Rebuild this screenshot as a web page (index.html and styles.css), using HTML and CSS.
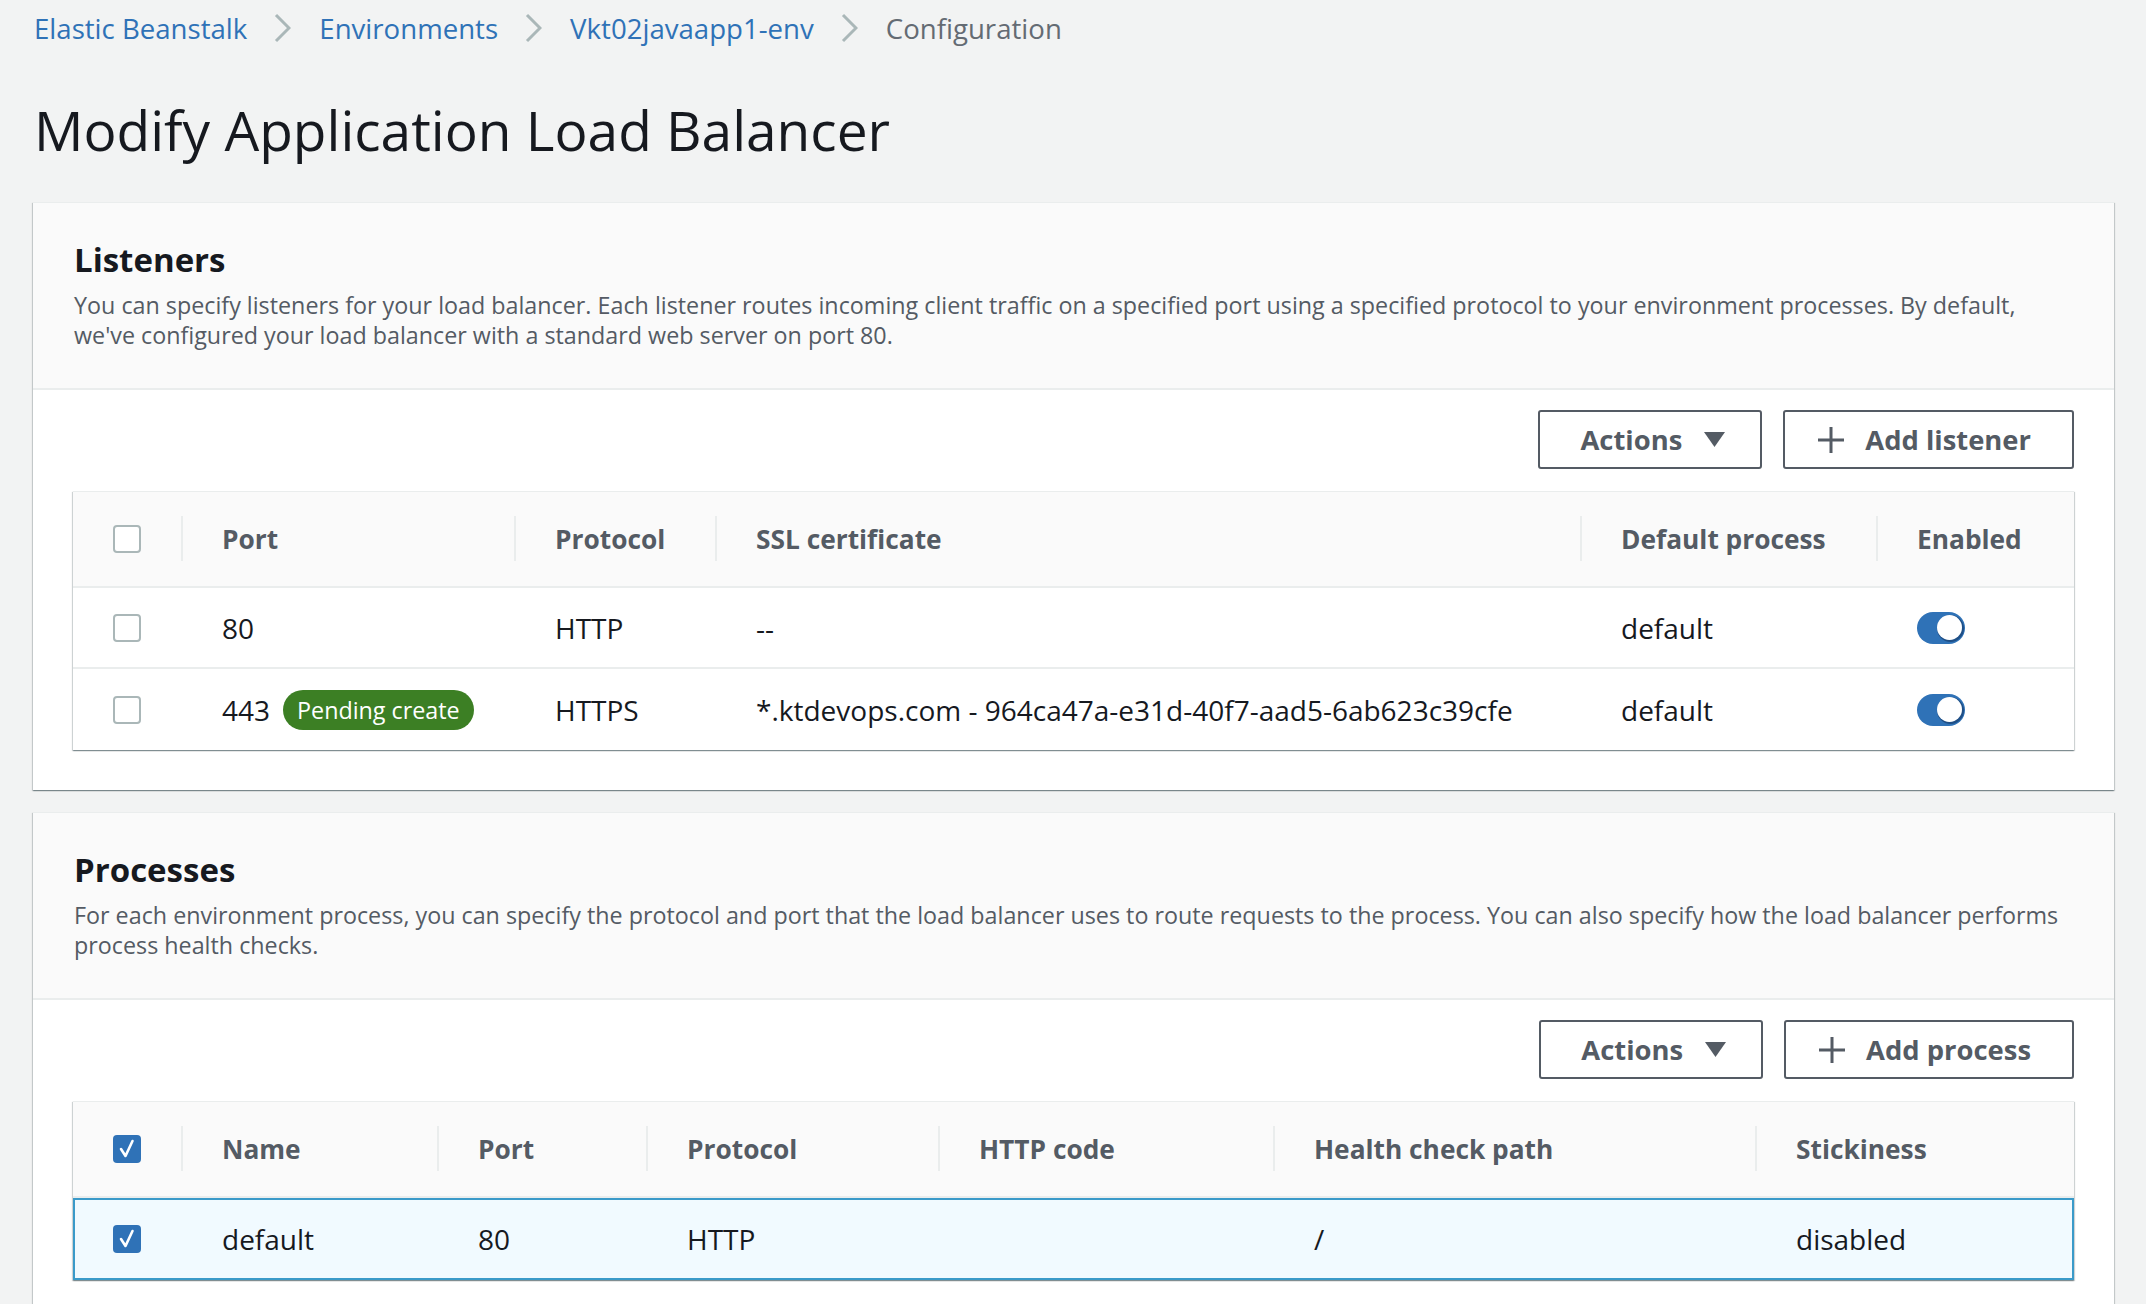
FILE: index.html
```html
<!DOCTYPE html>
<html lang="en">
<head>
<meta charset="utf-8">
<title>Modify Application Load Balancer</title>
<link rel="stylesheet" href="styles.css">
</head>
<body>
<div class="page">
  <nav class="crumbs">
    <a class="crumb-link" href="#">Elastic Beanstalk</a>
    <svg class="chev" viewBox="0 0 17 30" width="17" height="30"><path d="M2 2 L15 15 L2 28" /></svg>
    <a class="crumb-link" href="#">Environments</a>
    <svg class="chev" viewBox="0 0 17 30" width="17" height="30"><path d="M2 2 L15 15 L2 28" /></svg>
    <a class="crumb-link" href="#">Vkt02javaapp1-env</a>
    <svg class="chev" viewBox="0 0 17 30" width="17" height="30"><path d="M2 2 L15 15 L2 28" /></svg>
    <span class="crumb-current">Configuration</span>
  </nav>

  <h1 class="title">Modify Application Load Balancer</h1>

  <section class="panel">
    <header class="panel-head">
      <h2 class="panel-title">Listeners</h2>
      <p class="panel-desc"><span class="line">You can specify listeners for your load balancer. Each listener routes incoming client traffic on a specified port using a specified protocol to your environment processes. By default,</span> <span class="line">we've configured your load balancer with a standard web server on port 80.</span></p>
    </header>
    <div class="panel-body">
      <div class="toolbar">
        <button class="btn btn-actions">Actions <svg class="caret" viewBox="0 0 21 15" width="21" height="15"><polygon points="0,0 21,0 10.5,15" /></svg></button>
        <button class="btn btn-add"><svg class="plus" viewBox="0 0 28 28" width="28" height="28"><path d="M14 1 V27 M1 14 H27" /></svg> Add listener</button>
      </div>
      <div class="table">
        <div class="row head cols-listeners">
          <div class="cell cb"><span class="checkbox"></span></div>
          <div class="cell sep">Port</div>
          <div class="cell sep">Protocol</div>
          <div class="cell sep">SSL certificate</div>
          <div class="cell sep">Default process</div>
          <div class="cell sep">Enabled</div>
        </div>
        <div class="row cols-listeners">
          <div class="cell cb"><span class="checkbox"></span></div>
          <div class="cell">80</div>
          <div class="cell">HTTP</div>
          <div class="cell">--</div>
          <div class="cell">default</div>
          <div class="cell"><span class="toggle"><span class="knob"></span></span></div>
        </div>
        <div class="row last cols-listeners">
          <div class="cell cb"><span class="checkbox"></span></div>
          <div class="cell port-cell">443 <span class="badge">Pending create</span></div>
          <div class="cell">HTTPS</div>
          <div class="cell">*.ktdevops.com - 964ca47a-e31d-40f7-aad5-6ab623c39cfe</div>
          <div class="cell">default</div>
          <div class="cell"><span class="toggle"><span class="knob"></span></span></div>
        </div>
      </div>
    </div>
  </section>

  <section class="panel panel-second">
    <header class="panel-head">
      <h2 class="panel-title">Processes</h2>
      <p class="panel-desc"><span class="line">For each environment process, you can specify the protocol and port that the load balancer uses to route requests to the process. You can also specify how the load balancer performs</span> <span class="line">process health checks.</span></p>
    </header>
    <div class="panel-body">
      <div class="toolbar">
        <button class="btn btn-actions">Actions <svg class="caret" viewBox="0 0 21 15" width="21" height="15"><polygon points="0,0 21,0 10.5,15" /></svg></button>
        <button class="btn btn-add"><svg class="plus" viewBox="0 0 28 28" width="28" height="28"><path d="M14 1 V27 M1 14 H27" /></svg> Add process</button>
      </div>
      <div class="table">
        <div class="row head cols-processes">
          <div class="cell cb"><span class="checkbox checked"><svg viewBox="0 0 28 28" width="28" height="28"><path d="M8 14 L12.5 21 L19.5 6" /></svg></span></div>
          <div class="cell sep">Name</div>
          <div class="cell sep">Port</div>
          <div class="cell sep">Protocol</div>
          <div class="cell sep">HTTP code</div>
          <div class="cell sep">Health check path</div>
          <div class="cell sep">Stickiness</div>
        </div>
        <div class="row selected cols-processes">
          <div class="cell cb"><span class="checkbox checked"><svg viewBox="0 0 28 28" width="28" height="28"><path d="M8 14 L12.5 21 L19.5 6" /></svg></span></div>
          <div class="cell">default</div>
          <div class="cell">80</div>
          <div class="cell">HTTP</div>
          <div class="cell"></div>
          <div class="cell">/</div>
          <div class="cell">disabled</div>
        </div>
      </div>
    </div>
  </section>
</div>
</body>
</html>
```

FILE: styles.css
```css
* { box-sizing: border-box; }

html, body {
  margin: 0;
  padding: 0;
  background: #f2f3f3;
}

body {
  font-family: "Open Sans", "Noto Sans", sans-serif;
  color: #16191f;
}

.page {
  padding: 8px 32px 0 33px;
}

/* Breadcrumbs */
.crumbs {
  display: flex;
  align-items: center;
  height: 40px;
  font-size: 27.6px;
  line-height: 40px;
  padding-left: 1px;
}

.crumb-link {
  color: #2f72b7;
  text-decoration: none;
}

.crumb-current {
  color: #646b73;
}

.chev {
  margin: 0 28px 0 27px;
  fill: none;
  stroke: #aab7b8;
  stroke-width: 3;
}

/* Title */
.title {
  margin: 48px 0 38px;
  font-size: 55px;
  line-height: 68px;
  font-weight: 400;
  color: #16191f;
  padding-left: 1px;
}

/* Panels */
.panel {
  background: #ffffff;
  border-top: 1px solid #eaeded;
  box-shadow: 0 1px 1px 0 rgba(0, 28, 36, 0.3), 1px 1px 1px 0 rgba(0, 28, 36, 0.15), -1px 1px 1px 0 rgba(0, 28, 36, 0.15);
}

.panel-second {
  margin-top: 22px;
}

.panel-head {
  background: #fafafa;
  padding: 35px 40px 38px 41px;
  border-bottom: 2px solid #eaeded;
}

.panel-title {
  margin: 0;
  font-size: 33px;
  line-height: 44px;
  font-weight: 700;
  color: #16191f;
}

.panel-desc {
  margin: 8px 0 0;
  font-size: 23.3px;
  line-height: 30px;
  color: #545b64;
}

.panel-desc .line {
  white-space: nowrap;
}

.panel-body {
  padding: 20px 40px 40px;
}

/* Toolbar & buttons */
.toolbar {
  display: flex;
  justify-content: flex-end;
  gap: 21px;
  margin-bottom: 22px;
}

.btn {
  display: inline-flex;
  align-items: center;
  height: 59px;
  border: 2px solid #545b64;
  border-radius: 3px;
  background: #ffffff;
  color: #545b64;
  font-family: inherit;
  font-size: 27.4px;
  font-weight: 700;
}

.btn-actions {
  gap: 22px;
  padding: 0 35px 0 40px;
}

.btn-add {
  gap: 20px;
  padding: 0 41px 0 32px;
}

.caret {
  fill: #545b64;
}

.plus {
  fill: none;
  stroke: #545b64;
  stroke-width: 3;
}

/* Tables */
.table {
  background: #ffffff;
  border-top: 1px solid #eaeded;
  box-shadow: 0 1px 1px 0 rgba(0, 28, 36, 0.3), 1px 1px 1px 0 rgba(0, 28, 36, 0.15), -1px 1px 1px 0 rgba(0, 28, 36, 0.15);
}

.row {
  display: grid;
  align-items: center;
  height: 81px;
  border-bottom: 2px solid #eaeded;
  font-size: 28px;
  color: #16191f;
}

.row.last {
  border-bottom: none;
  height: 81px;
}

.row.head {
  height: 96px;
  background: #fafafa;
  color: #545b64;
  font-size: 26.3px;
  font-weight: 700;
}

.cols-listeners {
  grid-template-columns: 108px 333px 201px 865px 296px 1fr;
}

.cols-processes {
  grid-template-columns: 108px 256px 209px 292px 335px 482px 1fr;
}

.cell {
  position: relative;
  display: flex;
  align-items: center;
  height: 100%;
  padding-left: 41px;
  white-space: nowrap;
}

.cell.cb {
  padding-left: 40px;
}

.head .cell.sep::before {
  content: "";
  position: absolute;
  left: 0;
  top: 24px;
  bottom: 25px;
  width: 2px;
  background: #eaeded;
}

.row.selected {
  height: 82px;
  background: #f1faff;
  border: 2px solid #3a9ac9;
}

.row.selected .cell.cb {
  padding-left: 38px;
}

.row.selected .cell {
  padding-left: 39px;
}

.checkbox {
  display: inline-block;
  width: 28px;
  height: 28px;
  border: 2px solid #aab7b8;
  border-radius: 4px;
  background: #ffffff;
}

.checkbox.checked {
  border: none;
  background: #2f72b7;
}

.checkbox svg {
  display: block;
  fill: none;
  stroke: #ffffff;
  stroke-width: 2.6;
  stroke-linecap: round;
  stroke-linejoin: round;
}

.port-cell {
  gap: 13px;
}

.badge {
  display: inline-flex;
  align-items: center;
  height: 40px;
  padding: 0 14px;
  border-radius: 20px;
  background: #3c7f24;
  color: #ffffff;
  font-size: 23.3px;
}

.toggle {
  display: inline-flex;
  align-items: center;
  justify-content: flex-end;
  width: 48px;
  height: 32px;
  padding: 0 3px;
  border-radius: 16px;
  background: #2f72b7;
}

.knob {
  width: 25px;
  height: 25px;
  border-radius: 50%;
  background: #ffffff;
  box-shadow: 1px 1px 0 1px #1f4f86;
}
```
